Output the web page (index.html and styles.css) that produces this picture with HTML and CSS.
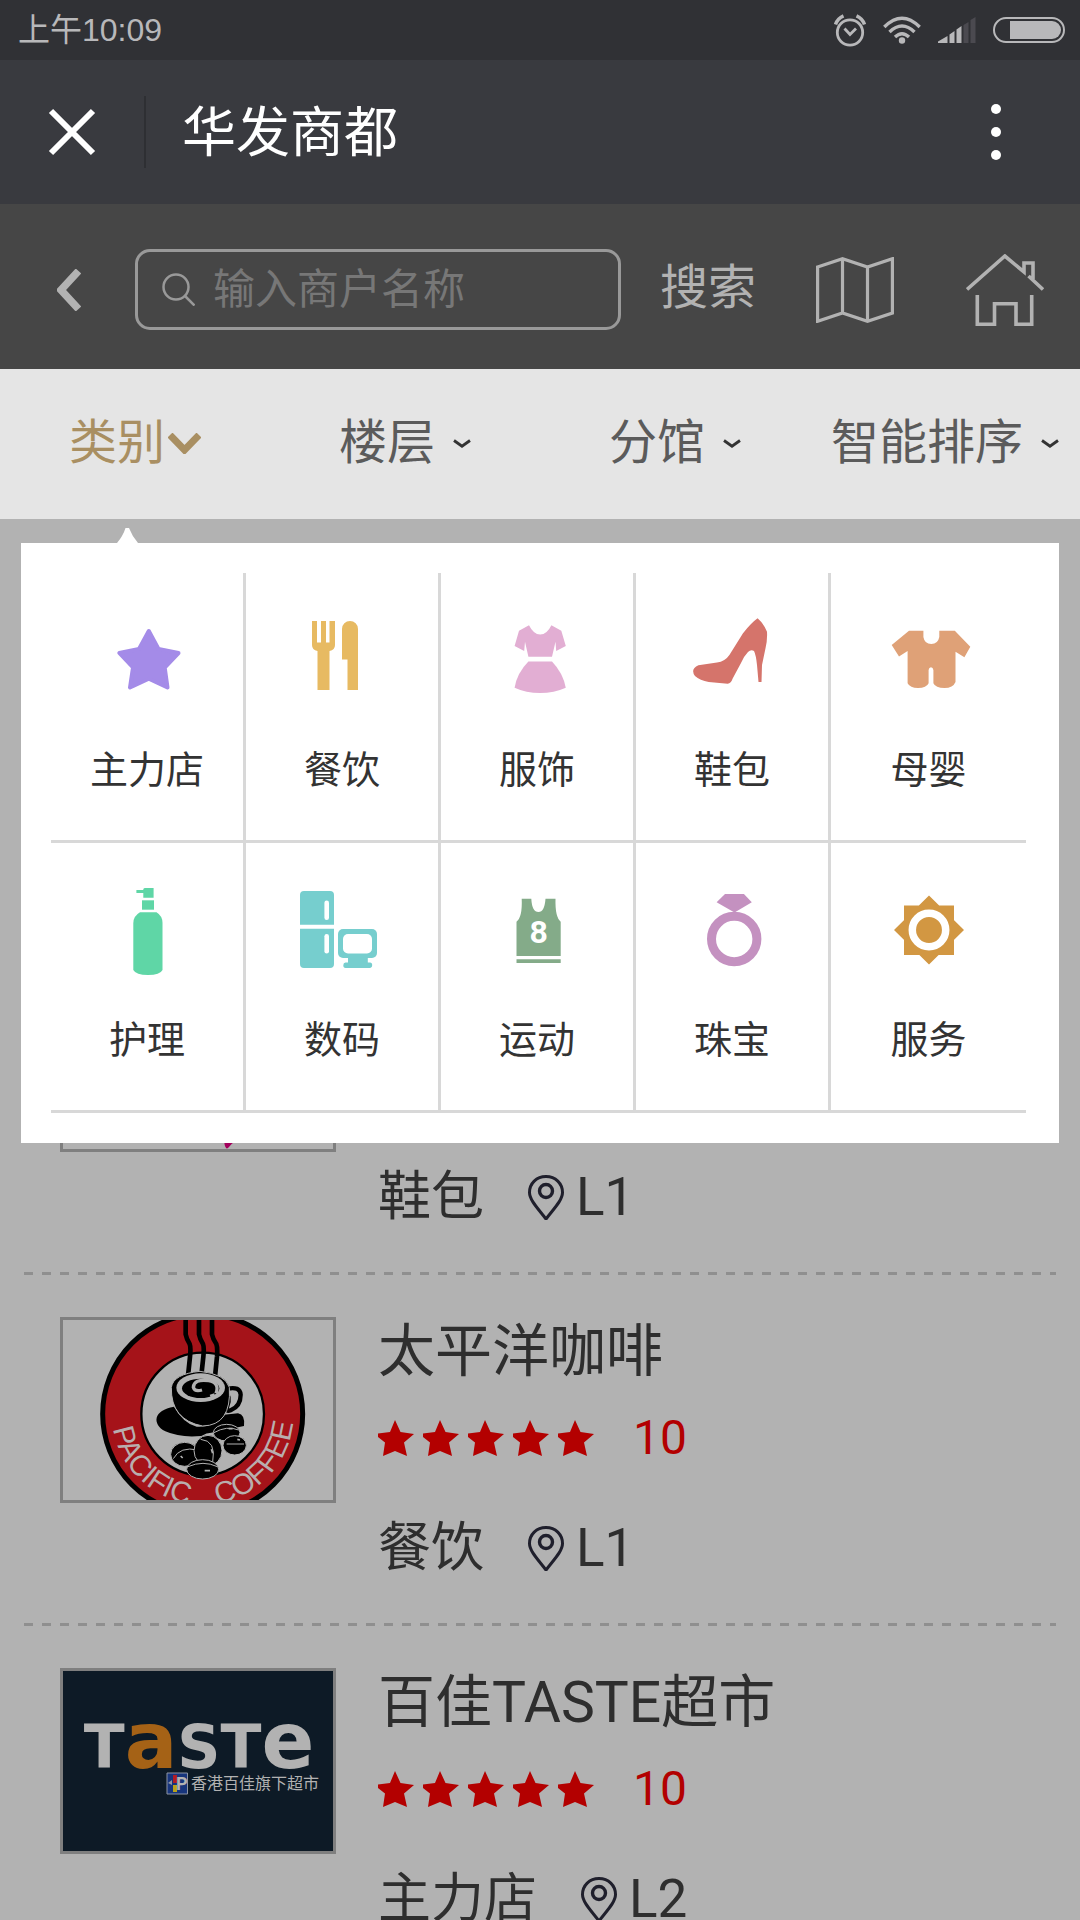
FILE: index.html
```html
<!DOCTYPE html>
<html lang="zh-CN">

<head>
	<meta charset="UTF-8" />
	<meta name="viewport" content="width=device-width, initial-scale=1.0" />
	<title>华发商都</title>
	<link rel="stylesheet" href="styles.css">
</head>

<body>
	<!-- Shapes used more than once -->
	<svg class="symbols" width="0" height="0" aria-hidden="true">
		<symbol id="star" viewBox="0 0 36 36">
			<path d="M17 0L22.500 12L36 14L26 22.500L29 36L17 31L5 36L7 22.500L0 17V13.500L12 12Z" fill="#b30000" />
		</symbol>
		<symbol id="pin" viewBox="0 0 36 45">
			<path d="M18 1.500C8.500 1.500 1.500 8.500 1.500 17.500C1.500 25 10 33.500 18 44C26 33.500 34.500 25 34.500 17.500C34.500 8.500 27.500 1.500 18 1.500Z" fill="none" stroke="#1f1f2c" stroke-width="3" />
			<circle cx="18" cy="16" r="6.500" fill="none" stroke="#1f1f2c" stroke-width="3.400" />
		</symbol>
		<symbol id="arrow" viewBox="0 0 18 9">
			<path d="M1 1.500L9 7.200L17 1.500" fill="none" stroke="#333" stroke-width="2.800" />
		</symbol>
	</svg>

	<div class="app">
		<div class="status">
			<span class="status__time">上午10:09</span>
			<div class="status__icons">
				<svg width="32" height="33" viewBox="0 0 32 33" fill="none" stroke="#b8b8ba">
					<circle cx="16" cy="18.500" r="12.700" stroke-width="2.800" />
					<path d="M10.500 14.500L16 20.500L22 14.500" stroke-width="2.800" />
					<path d="M1.500 10.500Q3.500 4.500 9.500 1.800M30.500 10.500Q28.500 4.500 22.500 1.800" stroke-width="3.500" />
				</svg>
				<svg width="38" height="28" viewBox="0 0 38 28" fill="none" stroke="#b8b8ba" stroke-width="3.400">
					<path d="M1.300 11Q19-6.500 36.700 11" />
					<path d="M6.500 16Q19 4 31.500 16" />
					<path d="M12 21Q19 14.500 26 21" />
					<circle cx="19" cy="24.500" r="3.200" fill="#b8b8ba" stroke="none" />
				</svg>
				<svg width="38" height="26" viewBox="0 0 38 26" fill="#b8b8ba">
					<path d="M0 26V24.500L9.500 19V26ZM11.500 26V17.500L16.500 14V26ZM18.500 26V12.500L23.500 9V26Z" />
					<path d="M25.500 26V8L30.500 5V26ZM32.500 26V3L37.500 0V26Z" fill="#4b4a50" />
				</svg>
				<svg width="72" height="26" viewBox="0 0 72 26">
					<rect x="1" y="1" width="70" height="24" rx="12" fill="none" stroke="#b8b8ba" stroke-width="2" />
					<path d="M17 4H59A9 9 0 0 1 59 22H17Z" fill="#b8b8ba" />
				</svg>
			</div>
		</div>

		<header class="titlebar">
			<button class="titlebar__close" type="button" aria-label="关闭">
				<svg width="48" height="48" viewBox="0 0 48 48" stroke="#fff" stroke-width="6"><path d="M3 3L45 45M45 3L3 45" /></svg>
			</button>
			<span class="titlebar__line"></span>
			<h1 class="titlebar__title">华发商都</h1>
			<button class="titlebar__more" type="button" aria-label="更多">
				<svg width="48" height="60" viewBox="0 0 48 60" fill="#fff"><circle cx="24" cy="7" r="5" /><circle cx="24" cy="30" r="5" /><circle cx="24" cy="53" r="5" /></svg>
			</button>
		</header>

		<form class="search" action="" method="GET">
			<a class="search__back" href="#" aria-label="返回">
				<svg width="24" height="42" viewBox="0 0 24 42"><path d="M21.500 2L4 21L21.500 40" fill="none" stroke="#b2b2b2" stroke-width="7.500" /></svg>
			</a>
			<label class="search__box">
				<svg width="33" height="33" viewBox="0 0 33 33" fill="none" stroke="#999" stroke-width="2.500"><circle cx="14" cy="14" r="12.500" /><path d="M23 23L32.500 32.500" /></svg>
				<input class="search__input" type="text" name="shop" placeholder="输入商户名称" aria-label="输入商户名称">
			</label>
			<button class="search__submit" type="submit">搜索</button>
			<a class="search__map" href="#" aria-label="地图">
				<svg width="78" height="66" viewBox="0 0 78 66" fill="none" stroke="#b2b2b2" stroke-width="3.200">
					<path d="M1.600 10L26.500 1.700L51.500 10L76.400 1.700V56L51.500 64.300L26.500 56L1.600 64.300ZM26.500 1.700V56M51.500 10V64.300" />
				</svg>
			</a>
			<a class="search__home" href="#" aria-label="首页">
				<svg width="78" height="72" viewBox="0 0 78 72" fill="none" stroke="#b2b2b2" stroke-width="3.600">
					<path d="M1 35.500L38.900 2L58 18V9H67V25M62.500 22L77 35.500" />
					<path d="M11.300 41V70.200H28.500V49.700H50V70.200H65.700V41" />
				</svg>
			</a>
		</form>

		<nav class="filter">
			<button class="filter__item filter__item--active" type="button">类别<svg width="33" height="21" viewBox="0 0 33 21"><path d="M2 2L16.500 17L31 2" fill="none" stroke="#a98f62" stroke-width="7" /></svg></button>
			<button class="filter__item" type="button">楼层<svg width="18" height="9"><use href="#arrow" /></svg></button>
			<button class="filter__item" type="button">分馆<svg width="18" height="9"><use href="#arrow" /></svg></button>
			<button class="filter__item" type="button">智能排序<svg width="18" height="9"><use href="#arrow" /></svg></button>
		</nav>

		<main class="content">
			<section class="menu">
				<svg class="menu__tip" width="21" height="15" viewBox="0 0 21 15"><path d="M0 15Q6 8 8.500 0H12Q15 8 21 15Z" fill="#fff" /></svg>
				<div class="menu__grid">
					<a class="menu__item" href="#">
						<svg width="96" height="96" viewBox="0 0 96 96"><path d="M49.800 19L59.500 37L79.500 41L65.700 55.500L68.500 75.500L49.800 66.800L31 75.500L34 55.500L20.300 41L40 37Z" fill="#a48be8" stroke="#a48be8" stroke-width="4" stroke-linejoin="round" /></svg>
						主力店
					</a>
					<a class="menu__item" href="#">
						<svg width="96" height="96" viewBox="0 0 96 96" fill="#e7ba62"><path d="M18 9H23V30.500H27V9H32V30.500H35.500V9H41V33Q41 38 35.500 39V78H23.500V39Q18 38 18 33Z" /><path d="M48 47.500V17A8 8 0 0 1 64 17V78H53.500V47.500Z" /></svg>
						餐饮
					</a>
					<a class="menu__item" href="#">
						<svg width="96" height="96" viewBox="0 0 96 96" fill="#e2aed3"><path d="M40 13.300L30 18.700L25.600 34L35.200 39L36 29.700L39.400 44.700H63L66.500 29.700L67.200 39L76.800 34L72.300 18.700L62.400 13.300Q58 22.500 51.200 22.500Q44.500 22.500 40 13.300Z" /><path d="M39.400 49.500H63Q74 61 76.800 75.700Q65 81 51.200 81Q37 81 25.600 75.700Q28 61 39.400 49.500Z" /></svg>
						服饰
					</a>
					<a class="menu__item" href="#">
						<svg width="96" height="96" viewBox="0 0 96 96"><path d="M73.600 6.300Q80 12 83 19.700Q83.500 28 81.500 36.300L78 53L77.500 70H74.500L73 53Q72 43 70 39Q67 37 64 40Q60 44 57 51L48.800 66.300Q47 71.500 43.700 71.700L24.700 70Q16 68.500 11 64Q6 57 14.400 53.300L33 50.500Q41 49.500 45.400 43L59 21.300Q67 11 73.600 6.300Z" fill="#d5746b" /></svg>
						鞋包
					</a>
					<a class="menu__item" href="#">
						<svg width="96" height="96" viewBox="0 0 96 96"><path d="M10.700 33L28 18.700H42.400V25Q43.500 32 50.300 32Q57 32 58.300 25V18.700H73.800L89.300 34.700L83.400 45.300L74.500 39.700V70Q72 76 63.500 76Q54.500 76 52.400 71.300V58Q52 55.300 50 55.300Q48 55.300 47.600 58V71.300Q45.500 76 37 76Q29 76 26.600 71.300V39L18 44.500Z" fill="#dfa177" /></svg>
						母婴
					</a>
					<a class="menu__item" href="#">
						<svg width="96" height="96" viewBox="0 0 96 96" fill="#5fd6a6"><path d="M37.400 8H44.300V7Q45 6 46 6H54.600V15.700H44.300V11H37.400Z" /><path d="M43 18.300H55V27.700H43Z" /><path d="M41 30.300H57.500Q63.500 34 63.500 41V88Q61 93 49 93Q37 93 34.300 88V41Q34.500 34 41 30.300Z" /></svg>
						护理
					</a>
					<a class="menu__item" href="#">
						<svg width="96" height="96" viewBox="0 0 96 96" fill="#76cece"><path d="M10 9H36Q40 9 40 13V42.700H6V13Q6 9 10 9ZM6 46.700H40V82Q40 86 36 86H10Q6 86 6 82Z" /><rect x="44" y="47" width="39" height="29" rx="5" /><path d="M54 75H73.800V80.500H76Q78.200 80.500 78.200 83.300T76 86H51.500Q49.300 86 49.300 83.300T51.500 80.500H54Z" /><g fill="#fff"><rect x="30.400" y="18.500" width="4.600" height="19.500" rx="2.300" /><rect x="30.400" y="52" width="4.600" height="19.500" rx="2.300" /><rect x="49" y="52" width="29" height="19.500" rx="5" /></g></svg>
						数码
					</a>
					<a class="menu__item" href="#">
						<svg width="96" height="96" viewBox="0 0 96 96" fill="#84ab89"><path d="M32.700 16.700H42.300Q43 30 49.500 30Q55.500 30 56.500 16.700H66.500Q66 35 71.700 39.700V74H27.500V39.700Q33.500 35 32.700 16.700ZM27.500 77.300H71.700V81H27.500Z" /><text class="menu__number" x="49.600" y="61" text-anchor="middle">8</text></svg>
						运动
					</a>
					<a class="menu__item" href="#">
						<svg width="96" height="96" viewBox="0 0 96 96"><circle cx="50.200" cy="57" r="22.700" fill="none" stroke="#c491c0" stroke-width="9" /><path d="M41 12H59.900L67.800 20.300L50.500 30.500L32.600 20.300Z" fill="#c491c0" /></svg>
						珠宝
					</a>
					<a class="menu__item" href="#">
						<svg width="96" height="96" viewBox="0 0 96 96" fill="#d29742"><path d="M23 23.500H73V73H23ZM48 13.500L83 48L48 82.500L13 48Z" /><circle cx="48" cy="48" r="16.700" stroke="#fff" stroke-width="7.500" /></svg>
						服务
					</a>
				</div>
			</section>

			<ul class="shops">
				<li class="shop">
					<div class="shop__logo">
						<svg viewBox="0 0 270 180"><path d="M172 158Q161 166 161.500 175Q163 182 166 178Q169 173 184 165Z" fill="#a3005c" /></svg>
					</div>
					<div class="shop__info">
						<p class="shop__meta">鞋包 <span class="shop__floor"><svg width="36" height="45"><use href="#pin" /></svg>L1</span></p>
					</div>
				</li>
				<li class="shop">
					<div class="shop__logo">
						<svg viewBox="69 60 810 540">
							<circle cx="488" cy="342" r="300" fill="#a51319" stroke="#000" stroke-width="15" />
							<circle cx="488" cy="342" r="184" fill="#b2b2b2" stroke="#000" stroke-width="7" />
							<g fill="none" stroke="#000" stroke-width="14">
								<path d="M437 58V103Q440 118 449 132Q453 142 450 170L444 228" />
								<path d="M477 58V103Q480 118 489 132Q493 142 490 170L484 226" />
								<path d="M516 58V103Q519 118 529 132Q533 142 531 170L525 230" />
								<path d="M562 266Q600 258 602 284Q602 318 572 331Q556 338 562 318Q572 290 558 280" stroke-width="13" />
							</g>
							<path d="M402 320C340 330 335 372 376 394Q420 414 484 408Q500 398 514 398L612 378Q616 344 594 340L545 345Q520 384 470 380Q430 370 402 320Z" />
							<path d="M394 262Q400 222 480 214Q556 222 568 262Q575 376 488 378Q392 360 394 262Z" stroke="#b2b2b2" stroke-width="3" />
							<ellipse cx="482" cy="263" rx="73" ry="43" fill="#b2b2b2" />
							<ellipse cx="482" cy="265" rx="56" ry="29" />
							<path d="M528 280Q540 248 506 242Q462 236 460 262Q464 276 486 270" fill="none" stroke="#b2b2b2" stroke-width="10" />
							<path d="M516 282L520 296" stroke="#b2b2b2" stroke-width="14" />
							<g stroke="#b2b2b2" stroke-width="3">
								<ellipse cx="560" cy="398" rx="40" ry="25" />
								<path d="M522 398Q560 376 596 390" fill="none" />
								<ellipse cx="584" cy="436" rx="35" ry="29" />
								<path d="M560 432H612" fill="none" />
								<ellipse cx="434" cy="463" rx="42" ry="36" />
								<path d="M400 476Q420 438 474 450" fill="none" />
								<ellipse cx="504" cy="452" rx="42" ry="46" />
								<path d="M482 418Q530 422 518 486" fill="none" />
								<ellipse cx="488" cy="508" rx="48" ry="29" />
								<path d="M444 500Q490 480 532 500" fill="none" />
								<path d="M494 512H510M428 474L422 468M514 448L518 460M566 386H578M592 418L600 420" stroke-width="5" />
							</g>
							<path id="ring" d="M216 342A272 272 0 0 0 760 342" fill="none" />
							<text class="shop__coffee"><textPath href="#ring" startOffset="44">PACIFIC</textPath></text>
							<text class="shop__coffee" text-anchor="end"><textPath href="#ring" startOffset="828">COFFEE</textPath></text>
						</svg>
					</div>
					<div class="shop__info">
						<h2 class="shop__name">太平洋咖啡</h2>
						<p class="shop__rating">
							<svg width="36" height="36"><use href="#star" /></svg>
							<svg width="36" height="36"><use href="#star" /></svg>
							<svg width="36" height="36"><use href="#star" /></svg>
							<svg width="36" height="36"><use href="#star" /></svg>
							<svg width="36" height="36"><use href="#star" /></svg>
							<span class="shop__score">10</span>
						</p>
						<p class="shop__meta">餐饮 <span class="shop__floor"><svg width="36" height="45"><use href="#pin" /></svg>L1</span></p>
					</div>
				</li>
				<li class="shop">
					<div class="shop__logo">
						<svg viewBox="0 0 270 180">
							<path d="M0 0H270V180H0Z" fill="#0d1a26" />
							<text class="shop__taste" x="136" y="97" text-anchor="middle">T<tspan class="shop__taste-small" fill="#a56216">a</tspan>ST<tspan class="shop__taste-small">e</tspan></text>
							<path d="M104 102H124.500V123H104Z" fill="#17357c" stroke="#8d94a3" />
							<path d="M110 104H114V112H110Z" fill="#b01c24" />
							<path d="M110 114H114V121H110Z" fill="#b9a21a" />
							<path d="M105 112L109 109V114Z" fill="#8d94a3" />
							<text class="shop__badge" x="113" y="119">P</text>
							<text class="shop__brand" x="128" y="118">香港百佳旗下超市</text>
						</svg>
					</div>
					<div class="shop__info">
						<h2 class="shop__name">百佳TASTE超市</h2>
						<p class="shop__rating">
							<svg width="36" height="36"><use href="#star" /></svg>
							<svg width="36" height="36"><use href="#star" /></svg>
							<svg width="36" height="36"><use href="#star" /></svg>
							<svg width="36" height="36"><use href="#star" /></svg>
							<svg width="36" height="36"><use href="#star" /></svg>
							<span class="shop__score">10</span>
						</p>
						<p class="shop__meta">主力店 <span class="shop__floor"><svg width="36" height="45"><use href="#pin" /></svg>L2</span></p>
					</div>
				</li>
			</ul>
		</main>
	</div>
</body>

</html>
```
FILE: styles.css
```css
:root{
	--page: #b2b2b2;
	--ink: #2e2e2e;
	--gold: #a98f62;
	--line: #d8d8d8;
	--score: #b30000;
}

*{
	box-sizing: border-box;
}

body{
	margin: 0;
	background-color: var(--page);
	color: var(--ink);
	font-family: Roboto, "Noto Sans CJK SC", sans-serif;
}

h1, h2, p, ul{
	margin: 0;
	padding: 0;
	font-weight: 400;
}

button, input{
	margin: 0;
	padding: 0;
	border: none;
	background: none;
	color: inherit;
	font: inherit;
}

a{
	color: inherit;
	text-decoration: none;
}

svg{
	display: block;
	flex: none;
}

.symbols{
	position: absolute;
}

.app{
	display: flex;
	flex-direction: column;
	height: 100vh;
	overflow: hidden;
}

/* Status */
.status{
	display: flex;
	flex: none;
	align-items: center;
	justify-content: space-between;
	height: 60px;
	padding: 0 15px 0 18px;
	background-color: #303135;
	color: #b8b8ba;
	font-family: "Liberation Sans", "Noto Sans CJK SC", sans-serif;
	font-size: 32px;
	line-height: 60px;
}

.status__icons{
	display: flex;
	align-items: center;
	gap: 17px;
}

/* Title */
.titlebar{
	display: flex;
	flex: none;
	align-items: center;
	height: 144px;
	padding: 0 60px 0 48px;
	background-color: #393a3f;
	color: #fff;
}

.titlebar__line{
	width: 2px;
	height: 72px;
	margin: 0 36px 0 48px;
	background-color: #2e2f33;
}

.titlebar__title{
	flex: 1;
	padding-top: 4px;
	font-size: 54px;
	line-height: 72px;
}

/* Search */
.search{
	display: flex;
	flex: none;
	align-items: center;
	padding: 45px 36px 39px 57px;
	background-color: #464646;
	color: var(--page);
}

.search__box{
	display: flex;
	flex: 1;
	align-items: center;
	gap: 18px;
	min-width: 0;
	height: 81px;
	margin: 0 39px 0 54px;
	padding: 0 24px;
	border: 3px solid #999;
	border-radius: 15px;
}

.search__input{
	flex: 1;
	min-width: 0;
	height: 60px;
	outline: none;
	font-size: 42px;
}

.search__input::placeholder{
	color: #777;
	opacity: 1;
}

.search__submit{
	margin-right: 60px;
	padding-bottom: 4px;
	font-size: 48px;
	line-height: 72px;
}

.search__map{
	margin-right: 72px;
}

/* Filter */
.filter{
	display: grid;
	flex: none;
	grid-template-columns: repeat(4, 1fr);
	height: 150px;
	padding-bottom: 2px;
	background-color: #e5e5e5;
	color: #5b5b5b;
}

.filter__item{
	display: flex;
	align-items: center;
	justify-content: center;
	gap: 18px;
	font-size: 48px;
	line-height: 72px;
	white-space: nowrap;
}

.filter__item--active{
	gap: 3px;
	color: var(--gold);
}

.content{
	position: relative;
	flex: 1;
	min-height: 0;
}

/* Category menu, opened over the list */
.menu{
	position: absolute;
	top: 24px;
	left: 21px;
	right: 21px;
	z-index: 1;
	padding: 30px 33px 30px 30px;
	background-color: #fff;
}

.menu__tip{
	position: absolute;
	top: -15px;
	left: 96px;
}

.menu__grid{
	display: grid;
	grid-template-columns: repeat(5, 1fr);
}

.menu__item{
	display: flex;
	flex-direction: column;
	align-items: center;
	gap: 38px;
	height: 270px;
	padding-top: 39px;
	border-right: 3px solid var(--line);
	border-bottom: 3px solid var(--line);
	color: #333;
	font-size: 38px;
	line-height: 48px;
}

.menu__item:nth-child(5n){
	border-right: none;
}

.menu__number{
	fill: #fff;
	font-size: 32px;
	font-weight: 700;
}

/* Shops, scrolled under the menu */
.shops{
	padding-top: 405px;
	list-style: none;
}

.shop{
	display: flex;
	gap: 42px;
	height: 351px;
	margin: 0 24px;
	padding: 42px 36px 45px;
	background: repeating-linear-gradient(90deg, #8f8f8f 0 9px, transparent 9px 18px) left bottom / 100% 3px no-repeat;
}

.shop__logo{
	flex: none;
	width: 276px;
	height: 186px;
	border: 3px solid #7f7f7f;
}

.shop__info{
	display: flex;
	flex: 1;
	flex-direction: column;
}

.shop__name{
	font-size: 57px;
	line-height: 70px;
}

.shop__rating{
	display: flex;
	align-items: center;
	gap: 9px;
	margin-top: 27px;
	color: var(--score);
	font-size: 48px;
	line-height: 48px;
}

.shop__score{
	margin-left: 30px;
}

.shop__meta{
	display: flex;
	gap: 44px;
	margin-top: auto;
	font-size: 53px;
	line-height: 66px;
}

.shop__floor{
	display: flex;
	align-items: center;
	gap: 12px;
}

.shop__coffee{
	fill: #b9aeae;
	font-family: "Liberation Sans", sans-serif;
	font-size: 88px;
}

.shop__taste{
	fill: #b2b2b2;
	font-family: "DejaVu Sans", sans-serif;
	font-size: 60px;
	font-weight: 700;
}

.shop__taste-small{
	font-size: 78px;
}

.shop__badge{
	fill: #b2b2b2;
	font-size: 18px;
	font-weight: 700;
}

.shop__brand{
	fill: #b2b2b2;
	font-size: 16px;
}
```
